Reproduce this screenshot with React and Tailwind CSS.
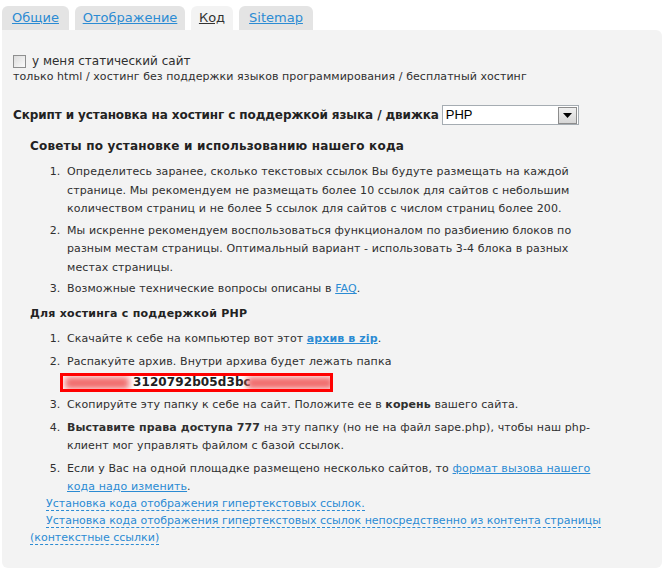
export default function App() {
  return (
    <div className="w-[666px] h-[574px] bg-white text-[#2f2f2f] overflow-hidden font-['DejaVu_Sans',sans-serif]">
      <div className="flex pt-[6px] pl-[2px] gap-[6px] text-[13px]">
        <div className="w-[67px] h-[24px] rounded-t-[6px] bg-[#e4e4e4] flex items-center justify-center">
          <a className="text-[#2b8bd3] underline">Общие</a>
        </div>
        <div className="w-[110px] h-[24px] rounded-t-[6px] bg-[#e4e4e4] flex items-center justify-center">
          <a className="text-[#2b8bd3] underline">Отображение</a>
        </div>
        <div className="w-[42px] h-[24px] rounded-t-[6px] bg-[#f3f3f3] flex items-center justify-center">
          <a className="text-[#333] underline">Код</a>
        </div>
        <div className="w-[74px] h-[24px] rounded-t-[6px] bg-[#e4e4e4] flex items-center justify-center">
          <a className="text-[#2b8bd3] underline">Sitemap</a>
        </div>
      </div>
      <div className="ml-[2px] w-[660px] h-[538px] bg-[#f3f3f3] rounded-b-[6px] rounded-tr-[6px] pl-[11px] pt-[23px]">
        <div className="flex items-center gap-[6px] text-[12px] leading-[16px]">
          <span className="w-[13px] h-[13px] border border-[#8e8f8f] bg-gradient-to-br from-[#dcdcdc] to-[#fbfbfb]" />
          <span>у меня статический сайт</span>
        </div>
        <div className="text-[11px] tracking-[0.07px] leading-[14px] mt-[1px]">
          только html / хостинг без поддержки языков программирования / бесплатный хостинг
        </div>
        <div className="flex items-center mt-[21px] gap-[3px]">
          <span className="text-[12px] tracking-[-0.1px] font-bold text-[#222]">Скрипт и установка на хостинг с поддержкой языка / движка</span>
          <div className="w-[137px] h-[20px] bg-white border border-[#a5acb2] flex items-center justify-between pl-[3px] pr-[1px]">
            <span className="text-[13px] text-black font-['Liberation_Sans',sans-serif]">PHP</span>
            <span className="w-[19px] h-[17px] bg-gradient-to-b from-[#f0f0f0] to-[#d6d6d6] border border-[#8c8c8c] flex items-center justify-center">
              <svg width="9" height="5" viewBox="0 0 9 5"><path d="M0 0H9L4.5 5Z" fill="#000" /></svg>
            </span>
          </div>
        </div>
        <div className="pl-[17px] pr-[30px] mt-[12px] text-[11px] tracking-[0.1px]">
          <div className="font-bold text-[#222] text-[12px] tracking-[0.2px] leading-[18px]">Советы по установке и использованию нашего кода</div>
          <ol className="list-decimal pl-[34px] mt-[8px] leading-[18.5px] space-y-[3px]">
            <li className="pl-[3px]">Определитесь заранее, сколько текстовых ссылок Вы будуте размещать на каждой<br />странице. Мы рекомендуем не размещать более 10 ссылок для сайтов с небольшим<br />количеством страниц и не более 5 ссылок для сайтов с числом страниц более 200.</li>
            <li className="pl-[3px]">Мы искренне рекомендуем воспользоваться функционалом по разбиению блоков по<br />разным местам страницы. Оптимальный вариант - использовать 3-4 блока в разных<br />местах страницы.</li>
            <li className="pl-[3px]">Возможные технические вопросы описаны в <a className="text-[#2b8bd3] underline">FAQ</a>.</li>
          </ol>
          <div className="font-bold text-[#222] text-[11px] tracking-[0.25px] leading-[18px] mt-[6px]">Для хостинга с поддержкой PHP</div>
          <ol className="list-decimal pl-[34px] mt-[7px] leading-[18.5px] space-y-[4px]">
            <li className="pl-[3px]">Скачайте к себе на компьютер вот этот <a className="text-[#2b8bd3] underline font-bold">архив в zip</a>.</li>
            <li className="pl-[3px] leading-[20px]">Распакуйте архив. Внутри архива будет лежать папка<br />
              <span className="inline-flex items-center h-[19px] w-[273px] -ml-[7px] bg-white border-[3px] border-[#ff0000] overflow-hidden relative align-middle">
                <span className="absolute left-[2px] top-[1px] w-[64px] h-[12px] bg-[#f06a6a] blur-[3px]" />
                <span className="pl-[70px] font-bold text-[#222] text-[12px] leading-[13px]">3120792b05d3bc</span>
                <span className="absolute left-[184px] top-[1px] w-[86px] h-[12px] bg-[#f06a6a] blur-[3px]" />
              </span>
            </li>
            <li className="pl-[3px]">Скопируйте эту папку к себе на сайт. Положите ее в <b>корень</b> вашего сайта.</li>
            <li className="pl-[3px]"><b>Выставите права доступа 777</b> на эту папку (но не на файл sape.php), чтобы наш php-<br />клиент мог управлять файлом с базой ссылок.</li>
            <li className="pl-[3px]">Если у Вас на одной площадке размещено несколько сайтов, то <a className="text-[#2b8bd3] underline">формат вызова нашего<br />кода надо изменить</a>.</li>
          </ol>
          <div className="-mt-[2px] leading-[17px] text-[#2b8bd3] tracking-[0px]">
            <div className="indent-[16px]"><a className="border-b border-dashed border-[#2b8bd3]">Установка кода отображения гипертекстовых ссылок.</a></div>
            <div className="indent-[16px]"><a className="border-b border-dashed border-[#2b8bd3]">Установка кода отображения гипертекстовых ссылок непосредственно из контента страницы<br />(контекстные ссылки)</a></div>
          </div>
        </div>
      </div>
    </div>
  );
}
